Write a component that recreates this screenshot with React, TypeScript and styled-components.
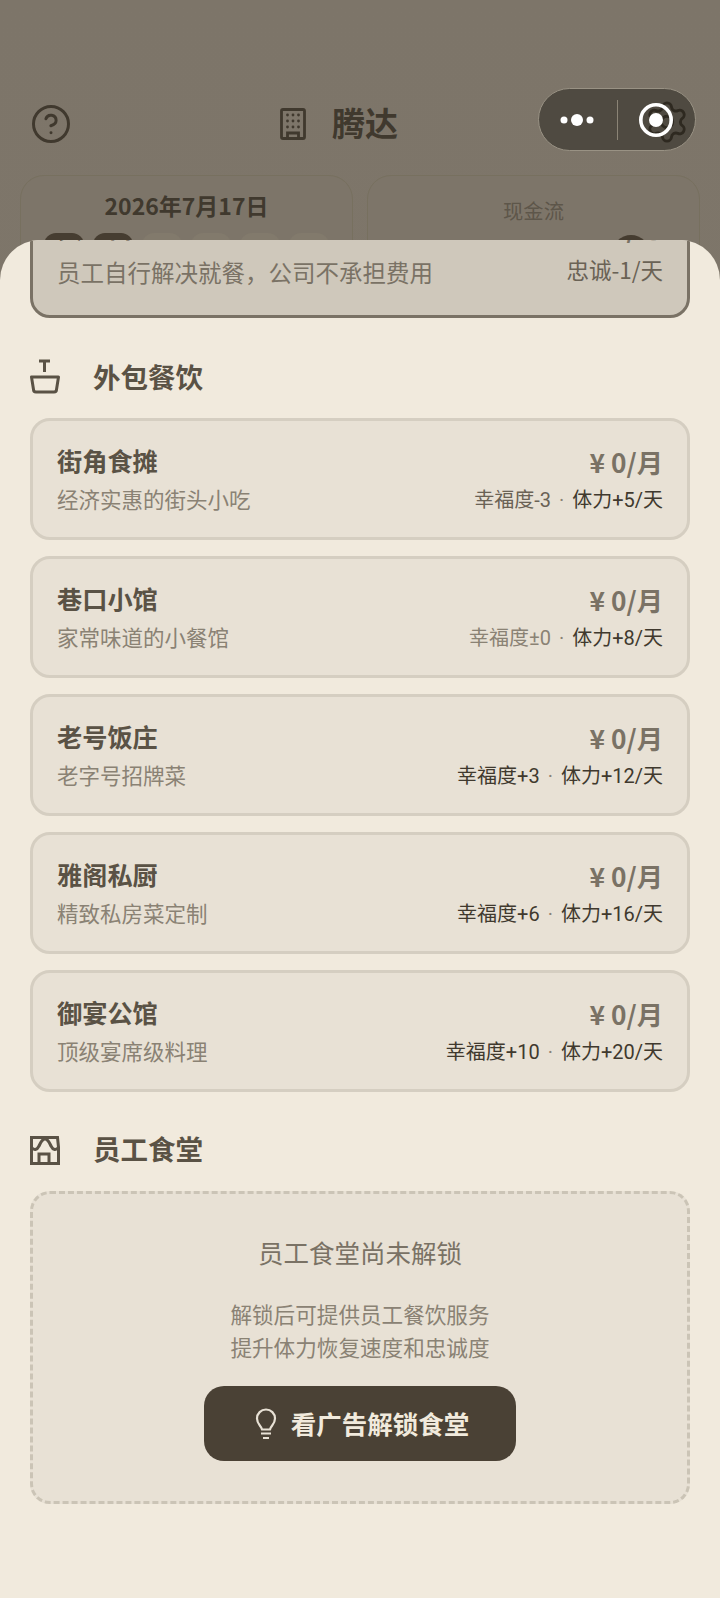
import styled, { createGlobalStyle } from "styled-components"
import { CircleHelp, Settings } from "lucide-react"

const GlobalStyle = createGlobalStyle`
  html, body {
    margin: 0;
    padding: 0;
    background: #7f776b;
    font-family: "Noto Sans CJK SC", "Noto Sans", sans-serif;
  }
  * { box-sizing: border-box; }
`

const Page = styled.div`
  position: relative;
  width: 720px;
  height: 1598px;
  overflow: hidden;
  background: linear-gradient(#7d7569, #80786c);
`

const Backdrop = styled.div`
  padding: 103px 20px 0;
`

const Header = styled.div`
  display: flex;
  justify-content: space-between;
  align-items: center;
  height: 42px;
  padding: 0 13px 0 10px;
  color: #40392e;
`

const HeaderSpacer = styled.div`
  width: 42px;
`

const Brand = styled.div`
  display: flex;
  align-items: center;
  gap: 26px;
  padding-right: 39px;
`

const BrandName = styled.div`
  margin-top: -5px;
  font-size: 33px;
  font-weight: 700;
  line-height: 42px;
`

const Capsule = styled.div`
  position: absolute;
  top: 88px;
  left: 538px;
  width: 158px;
  height: 63px;
  display: flex;
  align-items: center;
  border-radius: 32px;
  border: 1.5px solid #999284;
  background: #4f4a41;
`

const CapsuleSide = styled.div`
  position: relative;
  flex: 1;
  display: flex;
  justify-content: center;
  align-items: center;
`

const CapsuleDivider = styled.div`
  width: 1px;
  height: 40px;
  background: #8b8476;
`

const GearLayer = styled.div`
  position: absolute;
  top: -3px;
  left: 26px;
  display: flex;
  color: #2e2920;
`

const RecordLayer = styled.div`
  position: relative;
  display: flex;
`

const StatRow = styled.div`
  display: grid;
  grid-template-columns: 1fr 1fr;
  gap: 14px;
  margin-top: 30px;
`

const StatCard = styled.div`
  height: 110px;
  padding-top: 12px;
  border: 1.5px solid #77705f;
  border-radius: 24px;
  background: rgba(125, 117, 105, 0.6);
  text-align: center;
`

const DateText = styled.div`
  font-size: 23px;
  font-weight: 700;
  line-height: 34px;
  color: #40392e;
`

const DayRow = styled.div`
  display: flex;
  justify-content: center;
  gap: 9px;
  margin-top: 11px;
`

const DayPill = styled.div<{ $active?: boolean }>`
  width: 40px;
  height: 40px;
  border-radius: 12px;
  background: ${(p) => (p.$active ? "#463d31" : "#827a6c")};
`

const StatLabel = styled.div`
  font-size: 20.3px;
  line-height: 44px;
  color: #5d564a;
`

const CoinRow = styled.div`
  display: flex;
  justify-content: flex-end;
  margin-top: 3px;
  padding-right: 49px;
`

const Coin = styled.div`
  width: 38px;
  height: 38px;
  border-radius: 50%;
  background: #453c30;
`

const Sheet = styled.div`
  position: absolute;
  top: 240px;
  left: 0;
  right: 0;
  bottom: 0;
  overflow: hidden;
  border-radius: 40px 40px 0 0;
  background: #f1eadd;
`

const SheetContent = styled.div`
  margin-top: -58px;
  padding: 0 30px;
`

const ChosenCard = styled.div`
  display: flex;
  justify-content: space-between;
  padding: 24px 24px 27px;
  border: 3px solid #7a7265;
  border-radius: 20px;
  background: #cfc8bb;
`

const MealCard = styled.div`
  display: flex;
  justify-content: space-between;
  height: 122px;
  padding: 0 24px;
  border: 3px solid #d5cec1;
  border-radius: 20px;
  background: #e8e1d5;
`

const CardList = styled.div`
  display: flex;
  flex-direction: column;
  gap: 16px;
`

const CardSide = styled.div`
  display: flex;
  flex-direction: column;
  justify-content: center;
  align-items: flex-start;
  gap: 5px;
  padding-bottom: 2px;
`

const PriceSide = styled(CardSide)`
  align-items: flex-end;
  gap: 4px;
  padding: 2px 0 0;
`

const ChosenSide = styled.div<{ $right?: boolean }>`
  display: flex;
  flex-direction: column;
  align-items: ${(p) => (p.$right ? "flex-end" : "flex-start")};
  gap: 11px;
`

const MealName = styled.div`
  font-size: 25.2px;
  font-weight: 700;
  line-height: 36px;
  color: #5a5245;
`

const MealNote = styled.div`
  font-size: 21.5px;
  line-height: 32px;
  color: #8a8274;
`

const ChosenNote = styled(MealNote)`
  font-size: 23.5px;
  color: #7a7265;
`

const Price = styled.div`
  font-size: 26.3px;
  font-weight: 700;
  line-height: 36px;
  color: #7a7265;
`

const Effects = styled.div`
  display: flex;
  align-items: center;
  font-family: Roboto, "Noto Sans CJK SC", sans-serif;
  font-size: 20px;
  line-height: 32px;
`

const Effect = styled.span<{ $tone: "dark" | "mid" | "soft" }>`
  color: ${(p) => (p.$tone === "dark" ? "#40392e" : p.$tone === "mid" ? "#6a6255" : "#8a8274")};
`

const ChosenEffect = styled.div`
  margin-top: -3px;
  font-size: 22.5px;
  line-height: 32px;
  color: #6a6255;
`

const Dot = styled.span`
  margin: 0 8px;
  color: #8a8274;
`

const SectionHead = styled.div`
  display: flex;
  align-items: center;
  gap: 33px;
  height: 40px;
  margin: 38px 0 22px;
`

const CanteenHead = styled(SectionHead)`
  margin: 36px 0 23px;
`

const IconSlot = styled.div<{ $drop: number }>`
  display: flex;
  padding-top: ${(p) => p.$drop}px;
`

const SectionTitle = styled.div`
  font-size: 27.5px;
  font-weight: 700;
  line-height: 40px;
  color: #5a5245;
`

const LockedPanel = styled.div`
  display: flex;
  flex-direction: column;
  align-items: center;
  padding: 40px 0 40px;
  border: 3px dashed #cbc4b6;
  border-radius: 20px;
  background: #e8e1d5;
`

const LockedTitle = styled.div`
  font-size: 25.5px;
  line-height: 36px;
  color: #7a7265;
`

const LockedText = styled.div`
  margin-top: 27px;
  font-size: 21.6px;
  line-height: 33px;
  text-align: center;
  color: #8a8274;
`

const UnlockButton = styled.button`
  display: flex;
  justify-content: center;
  align-items: center;
  gap: 14px;
  width: 312px;
  height: 75px;
  margin-top: 23px;
  padding: 0 0 3px 4px;
  border: 0;
  border-radius: 20px;
  background: #4a4135;
  color: #f1eadd;
  font-family: inherit;
  font-size: 25.5px;
  font-weight: 700;
`

const meals = [
  { name: "街角食摊", note: "经济实惠的街头小吃", mood: "幸福度-3", tone: "mid", power: "体力+5/天" },
  { name: "巷口小馆", note: "家常味道的小餐馆", mood: "幸福度±0", tone: "soft", power: "体力+8/天" },
  { name: "老号饭庄", note: "老字号招牌菜", mood: "幸福度+3", tone: "dark", power: "体力+12/天" },
  { name: "雅阁私厨", note: "精致私房菜定制", mood: "幸福度+6", tone: "dark", power: "体力+16/天" },
  { name: "御宴公馆", note: "顶级宴席级料理", mood: "幸福度+10", tone: "dark", power: "体力+20/天" },
] as const

function BuildingIcon() {
  return (
    <svg width="26" height="32" viewBox="0 0 26 32" fill="none" stroke="#40392e" strokeWidth="2.8">
      <rect x="1.5" y="1.5" width="23" height="29" rx="1.5" />
      <path d="M7.5 30.5V25h11v5.500" />
      <g fill="#40392e" stroke="none">
        {[7, 13, 19].map((y) =>
          [7.500, 13, 18.500].map((x) => <circle key={`${x}-${y}`} cx={x} cy={y} r="1.400" />),
        )}
      </g>
    </svg>
  )
}

function BowlIcon() {
  return (
    <svg width="30" height="36" viewBox="0 0 30 36" fill="none" stroke="#5a5245" strokeWidth="3">
      <path d="M9 2H20M14.500 2V13" />
      <path d="M1.500 18H28.500L26.500 30.500a2.500 2.500 0 0 1-2.500 2.500H6A2.500 2.500 0 0 1 3.500 30.500Z" strokeLinejoin="round" />
    </svg>
  )
}

function CanteenIcon() {
  return (
    <svg width="30" height="29" viewBox="0 0 30 29" fill="none" stroke="#5a5245" strokeWidth="3">
      <path d="M1.500 27.500V1.500H27.500L28.500 11V27.500Z" />
      <path d="M1 11C4 15 7 14 9 10C11 6 12 3 15 3C18 3 19 6 21 10C23 14 26 15 29 11" />
      <path d="M9 27.500V18H19V27.500" />
    </svg>
  )
}

function BulbIcon() {
  return (
    <svg width="22" height="32" viewBox="0 0 22 32" fill="none" stroke="#e8e1d5" strokeWidth="2.200">
      <path d="M7 21.500C6.500 18 2 16.500 2 10.500a9 9 0 0 1 18 0C20 16.500 15.500 18 15 21.500Z" strokeLinejoin="round" />
      <path d="M6 25.500H16M8 30H14" />
    </svg>
  )
}

function MoreDots() {
  return (
    <svg width="44" height="16" viewBox="0 0 44 16" fill="#fff">
      <circle cx="8" cy="8" r="3.500" />
      <circle cx="21" cy="8" r="6" />
      <circle cx="34" cy="8" r="3.500" />
    </svg>
  )
}

function RecordIcon() {
  return (
    <svg width="36" height="36" viewBox="0 0 36 36">
      <circle cx="18" cy="18" r="15.200" fill="none" stroke="#fff" strokeWidth="3.600" />
      <circle cx="18" cy="18" r="7" fill="#fff" />
    </svg>
  )
}

function App() {
  return (
    <>
      <GlobalStyle />
      <Page>
        <Backdrop>
          <Header>
            <CircleHelp size={42} strokeWidth={1.700} />
            <Brand>
              <BuildingIcon />
              <BrandName>腾达</BrandName>
            </Brand>
            <HeaderSpacer />
          </Header>
          <StatRow>
            <StatCard>
              <DateText>2026年7月17日</DateText>
              <DayRow>
                <DayPill $active />
                <DayPill $active />
                <DayPill />
                <DayPill />
                <DayPill />
                <DayPill />
              </DayRow>
            </StatCard>
            <StatCard>
              <StatLabel>现金流</StatLabel>
              <CoinRow>
                <Coin />
              </CoinRow>
            </StatCard>
          </StatRow>
        </Backdrop>
        <Capsule>
          <CapsuleSide>
            <MoreDots />
          </CapsuleSide>
          <CapsuleDivider />
          <CapsuleSide>
            <GearLayer>
              <Settings size={46} strokeWidth={1.500} />
            </GearLayer>
            <RecordLayer>
              <RecordIcon />
            </RecordLayer>
          </CapsuleSide>
        </Capsule>
        <Sheet>
          <SheetContent>
            <ChosenCard>
              <ChosenSide>
                <MealName>员工自理</MealName>
                <ChosenNote>员工自行解决就餐，公司不承担费用</ChosenNote>
              </ChosenSide>
              <ChosenSide $right>
                <Price>¥ 0/月</Price>
                <ChosenEffect>忠诚-1/天</ChosenEffect>
              </ChosenSide>
            </ChosenCard>
            <SectionHead>
              <IconSlot $drop={2}>
                <BowlIcon />
              </IconSlot>
              <SectionTitle>外包餐饮</SectionTitle>
            </SectionHead>
            <CardList>
              {meals.map((meal) => (
                <MealCard key={meal.name}>
                  <CardSide>
                    <MealName>{meal.name}</MealName>
                    <MealNote>{meal.note}</MealNote>
                  </CardSide>
                  <PriceSide>
                    <Price>¥ 0/月</Price>
                    <Effects>
                      <Effect $tone={meal.tone}>{meal.mood}</Effect>
                      <Dot>·</Dot>
                      <Effect $tone="dark">{meal.power}</Effect>
                    </Effects>
                  </PriceSide>
                </MealCard>
              ))}
            </CardList>
            <CanteenHead>
              <IconSlot $drop={4}>
                <CanteenIcon />
              </IconSlot>
              <SectionTitle>员工食堂</SectionTitle>
            </CanteenHead>
            <LockedPanel>
              <LockedTitle>员工食堂尚未解锁</LockedTitle>
              <LockedText>
                解锁后可提供员工餐饮服务
                <br />
                提升体力恢复速度和忠诚度
              </LockedText>
              <UnlockButton>
                <IconSlot $drop={3}>
                  <BulbIcon />
                </IconSlot>
                看广告解锁食堂
              </UnlockButton>
            </LockedPanel>
          </SheetContent>
        </Sheet>
      </Page>
    </>
  )
}

export default App
